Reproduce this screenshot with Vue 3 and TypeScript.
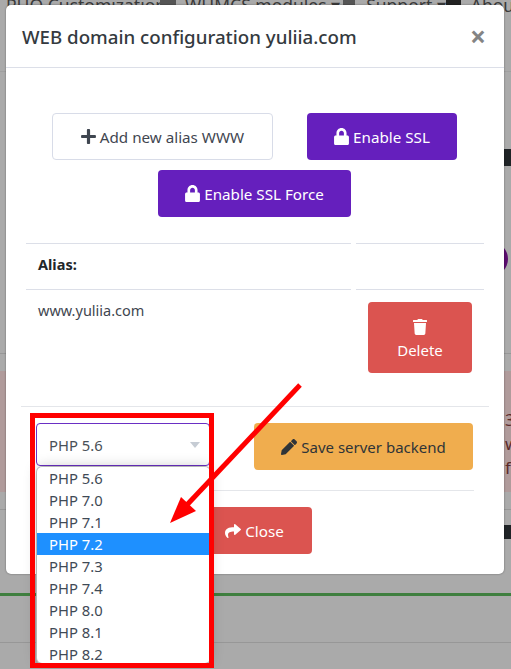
<script setup lang="ts">
const options: string[] = ['PHP 5.6', 'PHP 7.0', 'PHP 7.1', 'PHP 7.2', 'PHP 7.3', 'PHP 7.4', 'PHP 8.0', 'PHP 8.1', 'PHP 8.2']
const icons = {
  lock: 'M400 224h-24v-72C376 68.2 307.8 0 224 0S72 68.2 72 152v72H48c-26.5 0-48 21.5-48 48v192c0 26.5 21.5 48 48 48h352c26.5 0 48-21.5 48-48V272c0-26.5-21.5-48-48-48zm-104 0H152v-72c0-39.7 32.3-72 72-72s72 32.3 72 72v72z',
  plus: 'M416 208H272V64c0-17.67-14.33-32-32-32h-32c-17.67 0-32 14.33-32 32v144H32c-17.67 0-32 14.33-32 32v32c0 17.67 14.33 32 32 32h144v144c0 17.67 14.33 32 32 32h32c17.67 0 32-14.33 32-32V304h144c17.67 0 32-14.33 32-32v-32c0-17.67-14.33-32-32-32z',
  trash: 'M432 32H312l-9.4-18.7A24 24 0 0 0 281.1 0H166.8a23.72 23.72 0 0 0-21.4 13.3L136 32H16A16 16 0 0 0 0 48v32a16 16 0 0 0 16 16h416a16 16 0 0 0 16-16V48a16 16 0 0 0-16-16zM53.2 467a48 48 0 0 0 47.9 45h245.8a48 48 0 0 0 47.9-45L416 128H32z',
  pencil: 'M497.9 142.1l-46.1 46.1c-4.7 4.7-12.3 4.7-17 0l-111-111c-4.7-4.7-4.7-12.3 0-17l46.1-46.1c18.7-18.7 49.1-18.7 67.9 0l60.1 60.1c18.8 18.7 18.8 49.1 0 67.9zM284.2 99.8L21.6 362.4.4 483.9c-2.9 16.4 11.4 30.6 27.8 27.8l121.5-21.3 262.6-262.6c4.7-4.7 4.7-12.3 0-17l-111-111c-4.8-4.7-12.4-4.7-17.1 0z',
  share: 'M503.691 189.836L327.687 37.851C312.281 24.546 288 35.347 288 56.015v80.053C127.371 137.907 0 170.1 0 322.326c0 61.441 39.581 122.309 83.333 154.132 13.653 9.931 33.111-2.533 28.077-18.631C66.066 312.814 132.917 274.316 288 272.085V360c0 20.7 24.3 31.453 39.687 18.164l176.004-152c11.071-9.562 11.086-26.753 0-36.328z',
}
</script>

<template>
  <div class="page">
    <div class="backdrop">
      <div class="nav">
        <span class="nav-item n1">PHO Customization</span>
        <span class="nav-ico i2"></span><span class="nav-item n2">WHMCS modules ▾</span>
        <span class="nav-ico i3"></span><span class="nav-item n3">Support ▾</span>
        <span class="nav-ico i4"></span><span class="nav-item">About</span>
      </div>
      <div class="rule r0"></div>
      <div class="dark-strip"></div>
      <div class="circle-wrap"><div class="circle"></div></div>
      <div class="rule r1"></div>
      <div class="pink">
        <span>3</span>
        <span>w</span>
        <span>fi</span>
      </div>
      <div class="rule r2"></div>
      <div class="dark-strip d2"></div>
      <div class="green"></div>
      <div class="rule r3"></div>
    </div>

    <div class="modal">
      <header class="modal-head">
        <h5>WEB domain configuration yuliia.com</h5>
        <span class="close-x">×</span>
      </header>
      <div class="modal-body">
        <div class="btn-row">
          <button class="btn outline add">
            <svg class="ico" viewBox="0 0 448 512"><path :d="icons.plus" /></svg>
            Add new alias WWW
          </button>
          <button class="btn purple ssl">
            <svg class="ico" viewBox="0 0 448 512"><path :d="icons.lock" /></svg>
            Enable SSL
          </button>
        </div>
        <div class="btn-row second">
          <button class="btn purple force">
            <svg class="ico" viewBox="0 0 448 512"><path :d="icons.lock" /></svg>
            Enable SSL Force
          </button>
        </div>

        <div class="alias-table">
          <div class="cell head">Alias:</div>
          <div class="cell head"></div>
          <div class="cell">www.yuliia.com</div>
          <div class="cell action">
            <button class="btn danger delete">
              <svg class="ico trash" viewBox="0 0 448 512"><path :d="icons.trash" /></svg>
              <span>Delete</span>
            </button>
          </div>
        </div>

        <hr class="sep first-sep" />

        <div class="backend-row">
          <div class="select-wrap">
            <div class="select">
              <span>PHP 5.6</span>
              <i class="caret"></i>
            </div>
            <ul class="dropdown">
              <li v-for="o in options" :key="o" :class="{ active: o === 'PHP 7.2' }">{{ o }}</li>
            </ul>
          </div>
          <button class="btn orange save">
            <svg class="ico pencil" viewBox="0 0 512 512"><path :d="icons.pencil" /></svg>
            Save server backend
          </button>
        </div>

        <hr class="sep second-sep" />

        <div class="btn-row">
          <button class="btn danger close-btn">
            <svg class="ico share" viewBox="0 0 512 512"><path :d="icons.share" /></svg>
            Close
          </button>
        </div>
      </div>
    </div>

    <div class="red-box"></div>
    <svg class="arrow" viewBox="0 0 511 669" width="511" height="669">
      <line x1="300" y1="385" x2="184" y2="508" stroke="#ff0000" stroke-width="5" />
      <polygon points="170,523 181,497 196,511" fill="#ff0000" />
    </svg>
  </div>
</template>

<style>
html, body { margin: 0; padding: 0; background: #aaaaaa; }
</style>

<style scoped>
.page {
  position: relative;
  width: 511px;
  height: 669px;
  overflow: hidden;
  background: #aaaaaa;
  font-family: "Noto Sans", "Open Sans", sans-serif;
  color: #343a40;
}

/* dimmed page behind the dialog */
.backdrop { display: flex; flex-direction: column; height: 100%; }
.nav {
  display: flex;
  align-items: center;
  height: 12px;
  padding: 0 0 0 6px;
  margin-top: -1px;
  margin-bottom: 60px;
  font-size: 17.5px;
  color: #3a3a3a;
  white-space: nowrap;
}
.n1 { width: 154px; }
.n2 { width: 160px; }
.n3 { width: 89px; }
.nav-ico { width: 16px; height: 12px; background: #555; margin-right: 9px; flex: none; }
.i3 { width: 12px; margin-right: 11px; margin-left: 3px; }
.i4 { width: 15px; margin-right: 10px; background: #222; }
.rule { height: 1px; background: #979797; }
.r0 { background: #9f9f9f; }
.dark-strip {
  align-self: flex-end;
  width: 7px;
  height: 17px;
  margin-top: 77px;
  background: #1f2326;
}
.d2 { margin-top: 15px; height: 14px; }
.circle-wrap { align-self: flex-end; width: 7px; height: 34px; margin-top: 76px; overflow: hidden; }
.circle { width: 34px; height: 34px; border-radius: 50%; background: #5a0b6e; margin-left: -30px; }
.r1 { margin-top: 77px; }
.pink {
  display: flex;
  flex-direction: column;
  align-items: flex-start;
  height: 121px;
  margin-top: 17px;
  padding: 37px 0 0 505px;
  box-sizing: border-box;
  background: #b09b9b;
  font-size: 17px;
  line-height: 24px;
  color: #5b2a2a;
}
.r2 { margin-top: 17px; }
.green { height: 3px; margin-top: 54px; background: #3f7f3f; }
.r3 { margin-top: 46px; }

/* dialog */
.modal {
  position: absolute;
  left: 6px;
  top: 5px;
  width: 498px;
  height: 569px;
  background: #ffffff;
  border-radius: 5px;
  box-shadow: 0 0 2px rgba(0, 0, 0, 0.45);
}
.modal-head {
  display: flex;
  align-items: center;
  justify-content: space-between;
  padding: 0 18px 0 16px;
  height: 62px;
  border-bottom: 1px solid #dcdfe8;
}
.modal-head h5 {
  margin: 0;
  font-size: 18.7px;
  font-weight: 500;
  color: #343a40;
}
.close-x { font-size: 28px; font-weight: 700; line-height: 1; color: #848484; }

.modal-body { padding: 45px 1px 0 0; }
.btn-row { display: flex; justify-content: center; gap: 34px; }
.second { margin-top: 10px; }

.btn {
  display: inline-flex;
  align-items: center;
  justify-content: center;
  gap: 4px;
  height: 47px;
  padding: 0;
  box-sizing: border-box;
  border: 0;
  border-radius: 4px;
  font-family: inherit;
  font-size: 15.2px;
  color: #ffffff;
}
.ico { width: 15px; height: 17px; fill: currentColor; }
.outline { width: 221px; background: #fff; border: 1px solid #d8dce8; color: #3f4650; }
.purple { background: #651fbd; }
.ssl { width: 150px; }
.force { width: 193px; }
.danger { background: #db5450; }
.orange { background: #f0ad4e; color: #2f3438; font-size: 15px; }

.alias-table {
  display: grid;
  grid-template-columns: 325px 128px;
  column-gap: 5px;
  margin: 26px 20px 0;
  font-size: 14.5px;
  color: #3f4650;
}
.cell { border-top: 1px solid #dcdfe8; padding: 10px 12px 12px; }
.head { height: 46px; box-sizing: border-box; padding: 0 12px 5px; font-weight: 700; color: #22262a; display: flex; align-items: center; }
.action { padding-top: 12px; }
.delete { flex-direction: column; width: 104px; height: 71px; gap: 5px; padding-top: 4px; font-size: 15px; }
.trash { width: 14px; height: 16px; }

.sep { margin: 0; border: 0; border-top: 1px solid #e4e6ea; }
.first-sep { margin: 21px 14px 0 15px; }
.backend-row {
  display: flex;
  align-items: flex-start;
  gap: 44px;
  margin: 16px 0 0 30px;
}
.select-wrap { position: relative; width: 174px; z-index: 2; }
.select {
  display: flex;
  align-items: center;
  justify-content: space-between;
  height: 43px;
  padding: 0 9px 0 12px;
  box-sizing: border-box;
  border: 1px solid #6a2fc4;
  border-radius: 4px;
  background: #fff;
  font-size: 14.8px;
  color: #495057;
}
.caret {
  width: 0;
  height: 0;
  border-left: 5px solid transparent;
  border-right: 5px solid transparent;
  border-top: 6px solid #c6ccd4;
}
.dropdown {
  position: absolute;
  left: 1px;
  top: 44px;
  width: 173px;
  height: 196px;
  margin: 0;
  padding: 0;
  overflow: hidden;
  list-style: none;
  background: #fff;
  border-radius: 5px;
  box-shadow: 0 0 14px rgba(0, 0, 0, 0.22), 0 0 0 1px #c9c9c9;
  font-size: 14.8px;
  color: #3f4a56;
}
.dropdown li { height: 22px; line-height: 22px; padding-left: 12px; }
.dropdown li.active { background: #1e90ff; color: #fff; }
.save { width: 219px; }
.pencil { width: 16px; height: 16px; }

.second-sep { margin: 20px 29px 16px 30px; }
.close-btn { width: 115px; }
.share { width: 16px; height: 16px; }

/* hand-drawn annotation on top of the screenshot */
.red-box {
  position: absolute;
  left: 30px;
  top: 413px;
  width: 184px;
  height: 255px;
  box-sizing: border-box;
  border: 5px solid #ff0000;
  z-index: 3;
}
.arrow { position: absolute; left: 0; top: 0; z-index: 4; pointer-events: none; }
</style>
